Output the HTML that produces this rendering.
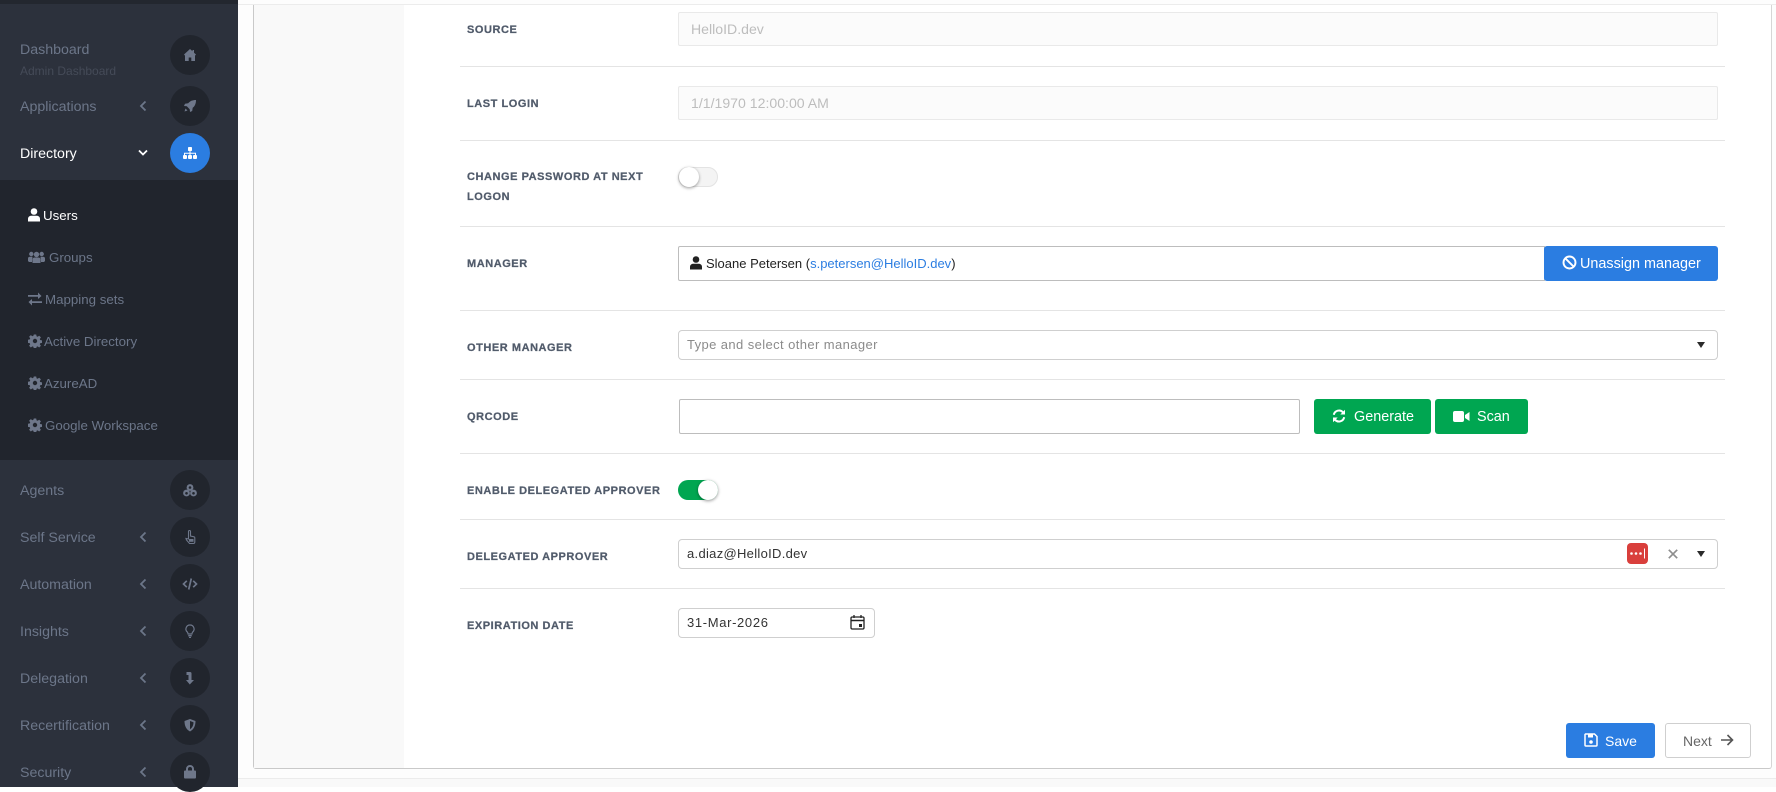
<!DOCTYPE html>
<html><head><meta charset="utf-8"><style>
html,body{margin:0;padding:0}
body{width:1776px;height:787px;position:relative;overflow:hidden;background:#fff;font-family:"Liberation Sans",sans-serif;font-size:14px}
div,span,svg{position:absolute;box-sizing:border-box;white-space:nowrap}
.n{left:20px;margin-top:1px;color:#6c7689;font-size:14.200px;line-height:20px}
.c{left:170px;width:40px;height:40px;border-radius:50%;background:#21252d}
.c svg{left:10px;top:10px;width:20px;height:20px;fill:#6e778a}
.ch{left:139px;width:8px;height:12px}
.s{color:#6c7689;font-size:13.300px;line-height:18px}
.si{left:28px;width:14px;height:14px;fill:#6e778a}
.l{left:467px;color:#515b6b;font:bold 11px/16px "Liberation Sans",sans-serif;letter-spacing:.55px;-webkit-text-stroke:.25px #515b6b}
.hr{left:460px;width:1265px;height:1px;background:#e4e4e4}
.in{border:1px solid #e9e9e9;background:#fbfbfb;border-radius:2px;color:#bdbdbd;font-size:14.100px;padding-left:12px}
.b{border-radius:3px;color:#fff;font-size:14px;text-align:center}
.sel{border:1px solid #cfcfcf;border-radius:4px;background:#fff;font-size:13px;padding-left:8px}
.ar{width:0;height:0;border-left:4.500px solid transparent;border-right:4.500px solid transparent;border-top:6px solid #2a2a2a}
</style></head><body>
<div style="left:238px;top:0;width:1538px;height:787px;background:#fdfdfd"></div>
<div style="left:238px;top:4px;width:1538px;height:1px;background:#ececec"></div>
<div style="left:238px;top:778px;width:1538px;height:9px;background:#f9f9f9;border-top:1px solid #ececec"></div>
<div style="left:253px;top:5px;width:1519px;height:764px;background:#fff;border-left:1px solid #c9c9c9;border-right:1px solid #d6d6d6;border-bottom:1px solid #c9c9c9;border-radius:0 0 3px 3px"></div>
<div style="left:254px;top:5px;width:150px;height:763px;background:#f9f9f9"></div>

<div style="left:0;top:0;width:238px;height:787px;background:#2c313c"></div>
<div style="left:0;top:0;width:238px;height:4px;background:#23272f"></div>
<div style="left:0;top:180px;width:238px;height:280px;background:#21252d"></div>

<div class="n" style="top:39px">Dashboard</div>
<div class="n" style="top:60px;font-size:12px;color:#454b58">Admin Dashboard</div>
<div class="n" style="top:96px">Applications</div>
<div class="n" style="top:143px;color:#fff">Directory</div>
<div class="n" style="top:480px">Agents</div>
<div class="n" style="top:527px">Self Service</div>
<div class="n" style="top:574px">Automation</div>
<div class="n" style="top:621px">Insights</div>
<div class="n" style="top:668px">Delegation</div>
<div class="n" style="top:715px">Recertification</div>
<div class="n" style="top:762px">Security</div>

<svg class="ch" style="top:100px" viewBox="0 0 8 12"><path d="M6.500 1.500 2 6l4.500 4.500" fill="none" stroke="#6c7689" stroke-width="1.800"/></svg>
<svg style="left:138px;top:149px;width:10px;height:8px" viewBox="0 0 10 8"><path d="M1 1.500 5 5.500l4-4" fill="none" stroke="#fff" stroke-width="1.800"/></svg>
<svg class="ch" style="top:531px" viewBox="0 0 8 12"><path d="M6.500 1.500 2 6l4.500 4.500" fill="none" stroke="#6c7689" stroke-width="1.800"/></svg>
<svg class="ch" style="top:578px" viewBox="0 0 8 12"><path d="M6.500 1.500 2 6l4.500 4.500" fill="none" stroke="#6c7689" stroke-width="1.800"/></svg>
<svg class="ch" style="top:625px" viewBox="0 0 8 12"><path d="M6.500 1.500 2 6l4.500 4.500" fill="none" stroke="#6c7689" stroke-width="1.800"/></svg>
<svg class="ch" style="top:672px" viewBox="0 0 8 12"><path d="M6.500 1.500 2 6l4.500 4.500" fill="none" stroke="#6c7689" stroke-width="1.800"/></svg>
<svg class="ch" style="top:719px" viewBox="0 0 8 12"><path d="M6.500 1.500 2 6l4.500 4.500" fill="none" stroke="#6c7689" stroke-width="1.800"/></svg>
<svg class="ch" style="top:766px" viewBox="0 0 8 12"><path d="M6.500 1.500 2 6l4.500 4.500" fill="none" stroke="#6c7689" stroke-width="1.800"/></svg>

<div class="c" style="top:35px"><svg viewBox="0 0 20 20"><path d="M10 4 4 9.500 4.800 10.500 5 10.400V16h3.700v-3.500h2.600V16H15v-5.600l.2.100.8-1L14 7.700V5h-1.500v1.300z"/></svg></div>
<div class="c" style="top:86px"><svg viewBox="0 0 20 20"><path d="M16 4c-3.500 0-6 1-7.800 3.300L5 7.800 4 10l2.800.3 2.900 2.900.3 2.800 2.200-1 .5-3.200C15 10 16 7.500 16 4zM5.500 12.500 4.500 15.500 7.500 14.500z"/></svg></div>
<div class="c" style="top:133px;background:#2b7de1"><svg viewBox="0 0 20 20" style="fill:#fff"><rect x="8" y="4" width="4" height="4" rx=".8"/><path d="M9.500 8h1v1.800H16V12h-1v-1.200h-4.500V12h-1v-1.200H5V12H4V9.800h5.500z"/><rect x="3" y="12" width="4" height="4" rx="1"/><rect x="8" y="12" width="4" height="4" rx="1"/><rect x="13" y="12" width="4" height="4" rx="1"/></svg></div>
<div class="c" style="top:470px"><svg viewBox="0 0 20 20"><circle cx="10" cy="7.500" r="3.400"/><circle cx="6.500" cy="13" r="3.400"/><circle cx="13.500" cy="13" r="3.400"/><circle cx="10" cy="7.500" r="1.300" fill="#21252d"/><circle cx="6.500" cy="13.300" r="1.300" fill="#21252d"/><circle cx="13.500" cy="13.300" r="1.300" fill="#21252d"/></svg></div>
<div class="c" style="top:517px"><svg viewBox="0 0 20 20"><path d="M8.500 4.500a1 1 0 0 1 2 0V9l3.500.8a1 1 0 0 1 .8 1V15a1.500 1.500 0 0 1-1.500 1.500H9.500L6.500 13 6 11.500l2.500.5z" fill="none" stroke="#6e778a" stroke-width="1.100"/><rect x="9" y="12" width="4.500" height="2.800"/></svg></div>
<div class="c" style="top:564px"><svg viewBox="0 0 20 20"><path d="M6.800 6.800 3.500 10l3.300 3.200M13.200 6.800 16.500 10l-3.300 3.200M11.300 4.500 8.700 15.500" fill="none" stroke="#6e778a" stroke-width="1.700"/></svg></div>
<div class="c" style="top:611px"><svg viewBox="0 0 20 20"><path d="M10 4a4 4 0 0 1 2.700 7c-.6.700-.7 1.200-.8 2H8.100c-.1-.8-.2-1.300-.8-2A4 4 0 0 1 10 4z" fill="none" stroke="#6e778a" stroke-width="1.200"/><rect x="8.200" y="14" width="3.600" height="1.500" rx=".5"/><rect x="9" y="16" width="2" height="1"/></svg></div>
<div class="c" style="top:658px"><svg viewBox="0 0 20 20"><path d="M6.500 4H10a1.500 1.500 0 0 1 1.500 1.500V12H14l-4.200 4.500L6 12h2.500V7H6.500z"/></svg></div>
<div class="c" style="top:705px"><svg viewBox="0 0 20 20"><path d="M10 4 15.500 6c0 5-1.800 8.500-5.500 10.500C6.300 14.500 4.500 11 4.500 6zM10 6v8.300c2.300-1.500 3.500-4 3.500-7z" fill-rule="evenodd"/></svg></div>
<div class="c" style="top:752px"><svg viewBox="0 0 20 20"><path d="M5 9h1V7.500a4 4 0 0 1 8 0V9h1a1 1 0 0 1 1 1v6a1 1 0 0 1-1 1H5a1 1 0 0 1-1-1v-6a1 1 0 0 1 1-1zM8 9h4V7.500a2 2 0 0 0-4 0z" transform="translate(0,-.5)" /></svg></div>

<svg class="si" style="top:208px;width:12px;fill:#fff" viewBox="0 0 12 14"><circle cx="6" cy="3.500" r="3.300"/><path d="M0 13.500V11c0-2 1.500-3.200 3.300-3.200h5.400C10.500 7.800 12 9 12 11v2.500z"/></svg>
<div class="s" style="left:43px;top:207px;color:#fff">Users</div>
<svg class="si" style="top:250px;width:17px" viewBox="0 0 17 14"><circle cx="3.300" cy="4" r="2.200"/><circle cx="13.700" cy="4" r="2.200"/><circle cx="8.500" cy="4.500" r="2.700"/><path d="M0 11V8.500C0 7.300 1 6.800 2 6.800h2.500L4 12H1zM17 11V8.500c0-1.200-1-1.700-2-1.700h-2.500L13 12h3zM4.500 13V9.500C4.500 8.200 5.500 7.500 6.500 7.500h4c1 0 2 .7 2 2V13z"/></svg>
<div class="s" style="left:49px;top:249px">Groups</div>
<svg class="si" style="top:292px" viewBox="0 0 14 14"><path d="M0 4h10V1.500L13.500 5 10 8V5.800H0z" transform="translate(0,-1)"/><path d="M14 10H4v2.500L.500 9 4 6v2.200h10z" transform="translate(0,1)"/></svg>
<div class="s" style="left:45px;top:291px">Mapping sets</div>
<svg class="si" style="top:334px" viewBox="0 0 14 14"><path d="M5.800.500h2.400l.4 1.900 1 .4 1.600-1.100 1.700 1.700-1.100 1.600.4 1 1.900.4v2.400l-1.900.4-.4 1 1.100 1.600-1.700 1.700-1.600-1.100-1 .4-.4 1.900H5.800l-.4-1.900-1-.4-1.600 1.100-1.700-1.700 1.100-1.600-.4-1-1.900-.4V5.800l1.900-.4.4-1L1.100 2.800l1.700-1.700 1.600 1.100 1-.4zM7 4.800a2.200 2.200 0 1 0 0 4.400 2.200 2.200 0 0 0 0-4.400z" fill-rule="evenodd"/></svg>
<div class="s" style="left:44px;top:333px">Active Directory</div>
<svg class="si" style="top:376px" viewBox="0 0 14 14"><path d="M5.800.500h2.400l.4 1.900 1 .4 1.600-1.100 1.700 1.700-1.100 1.600.4 1 1.900.4v2.400l-1.900.4-.4 1 1.100 1.600-1.700 1.700-1.600-1.100-1 .4-.4 1.900H5.800l-.4-1.900-1-.4-1.600 1.100-1.700-1.700 1.100-1.600-.4-1-1.900-.4V5.800l1.900-.4.4-1L1.100 2.800l1.700-1.700 1.600 1.100 1-.4zM7 4.800a2.200 2.200 0 1 0 0 4.400 2.200 2.200 0 0 0 0-4.400z" fill-rule="evenodd"/></svg>
<div class="s" style="left:44px;top:375px">AzureAD</div>
<svg class="si" style="top:418px" viewBox="0 0 14 14"><path d="M5.800.500h2.400l.4 1.900 1 .4 1.600-1.100 1.700 1.700-1.100 1.600.4 1 1.900.4v2.400l-1.900.4-.4 1 1.100 1.600-1.700 1.700-1.600-1.100-1 .4-.4 1.900H5.800l-.4-1.900-1-.4-1.600 1.100-1.700-1.700 1.100-1.600-.4-1-1.900-.4V5.800l1.900-.4.4-1L1.100 2.800l1.700-1.700 1.600 1.100 1-.4zM7 4.800a2.200 2.200 0 1 0 0 4.400 2.200 2.200 0 0 0 0-4.400z" fill-rule="evenodd"/></svg>
<div class="s" style="left:45px;top:417px">Google Workspace</div>

<div class="hr" style="top:66px"></div><div class="hr" style="top:140px"></div><div class="hr" style="top:226px"></div><div class="hr" style="top:310px"></div><div class="hr" style="top:379px"></div><div class="hr" style="top:453px"></div><div class="hr" style="top:519px"></div><div class="hr" style="top:588px"></div>

<div class="l" style="top:22px">SOURCE</div>
<div class="l" style="top:96px">LAST LOGIN</div>
<div class="l" style="top:169px">CHANGE PASSWORD AT NEXT</div>
<div class="l" style="top:189px">LOGON</div>
<div class="l" style="top:256px">MANAGER</div>
<div class="l" style="top:340px">OTHER MANAGER</div>
<div class="l" style="top:409px">QRCODE</div>
<div class="l" style="top:483px">ENABLE DELEGATED APPROVER</div>
<div class="l" style="top:549px">DELEGATED APPROVER</div>
<div class="l" style="top:618px">EXPIRATION DATE</div>

<div class="in" style="left:678px;top:12px;width:1040px;height:34px;line-height:32px">HelloID.dev</div>
<div class="in" style="left:678px;top:86px;width:1040px;height:34px;line-height:32px">1/1/1970 12:00:00 AM</div>

<div style="left:678px;top:167px;width:40px;height:20px;border-radius:10px;background:#f4f4f4;border:1px solid #e3e3e3"></div>
<div style="left:678.500px;top:167px;width:20px;height:20px;border-radius:50%;background:#fff;box-shadow:0 1px 3px rgba(0,0,0,.4)"></div>

<div style="left:678px;top:246px;width:867px;height:35px;border:1px solid #bdbdbd;border-radius:2px 0 0 2px;background:#fff"></div>
<svg style="left:690px;top:256px;width:12px;height:14px;fill:#222" viewBox="0 0 12 14"><circle cx="6" cy="3.500" r="3.300"/><path d="M0 13.500V11c0-2 1.500-3.200 3.300-3.200h5.400C10.500 7.800 12 9 12 11v2.500z"/></svg>
<div style="left:706px;top:255px;font-size:13px;line-height:17px;color:#222">Sloane Petersen (<span style="position:static;color:#2b7de1">s.petersen@HelloID.dev</span>)</div>
<div class="b" style="left:1544px;top:246px;width:174px;height:35px;background:#2b7de1"></div>
<svg style="left:1562px;top:255px;width:15px;height:15px" viewBox="0 0 15 15"><circle cx="7.500" cy="7.500" r="6" fill="none" stroke="#fff" stroke-width="1.900"/><path d="M3.300 3.300 11.700 11.700" stroke="#fff" stroke-width="1.900"/></svg>
<div style="left:1580px;top:255px;color:#fff;font-size:14.400px;line-height:18px">Unassign manager</div>

<div class="sel" style="left:678px;top:330px;width:1040px;height:30px;line-height:27px;color:#8b8b8b;letter-spacing:.4px">Type and select other manager</div>
<div class="ar" style="left:1697px;top:342px"></div>

<div style="left:679px;top:399px;width:621px;height:35px;border:1px solid #bdbdbd;border-radius:2px;background:#fff"></div>
<div class="b" style="left:1314px;top:399px;width:117px;height:35px;background:#00a651"></div>
<svg style="left:1332px;top:409px;width:14px;height:14px" viewBox="0 0 14 14"><path d="M1.800 5.800A5.300 5.300 0 0 1 11 3.300M12.200 8.200A5.300 5.300 0 0 1 3 10.700" fill="none" stroke="#fff" stroke-width="2"/><path d="M13 .8v4.700H8.300zM1 13.200V8.500h4.700z" fill="#fff"/></svg>
<div style="left:1354px;top:408px;color:#fff;font-size:14.400px;line-height:18px">Generate</div>
<div class="b" style="left:1435px;top:399px;width:93px;height:35px;background:#00a651"></div>
<svg style="left:1453px;top:410px;width:17px;height:13px;fill:#fff" viewBox="0 0 17 13"><rect x="0" y="1" width="11" height="11" rx="2"/><path d="M12 5 16.500 2v9L12 8z"/></svg>
<div style="left:1477px;top:408px;color:#fff;font-size:14.400px;line-height:18px">Scan</div>

<div style="left:678px;top:480px;width:40px;height:20px;border-radius:10px;background:#00a651"></div>
<div style="left:698px;top:480px;width:20px;height:20px;border-radius:50%;background:#fff;box-shadow:0 1px 3px rgba(0,0,0,.4)"></div>

<div class="sel" style="left:678px;top:539px;width:1040px;height:30px;line-height:28px;color:#333;letter-spacing:.3px">a.diaz@HelloID.dev</div>
<div style="left:1627px;top:543px;width:21px;height:21px;border-radius:4px;background:#d93f3c"></div>
<svg style="left:1628px;top:548px;width:19px;height:11px" viewBox="0 0 19 11"><circle cx="3.500" cy="5.500" r="1.300" fill="#fff"/><circle cx="8" cy="5.500" r="1.300" fill="#fff"/><circle cx="12.500" cy="5.500" r="1.300" fill="#fff"/><path d="M16.500 0.500v10" stroke="#fff" stroke-width="1"/></svg>
<svg style="left:1668px;top:549px;width:10px;height:10px" viewBox="0 0 10 10"><path d="M.8.800 9.200 9.200M9.200.8.800 9.200" stroke="#8e8e8e" stroke-width="1.700"/></svg>
<div class="ar" style="left:1697px;top:551px"></div>

<div class="sel" style="left:678px;top:608px;width:197px;height:30px;line-height:28px;color:#333;letter-spacing:.65px">31-Mar-2026</div>
<svg style="left:850px;top:614px;width:15px;height:16px" viewBox="0 0 15 16"><rect x="1" y="3" width="13" height="12" rx="1.200" fill="none" stroke="#222" stroke-width="1.300"/><path d="M1 6.500h13" stroke="#222" stroke-width="1.500"/><path d="M4 1v3M11 1v3" stroke="#222" stroke-width="1.300"/><rect x="9" y="10" width="3" height="3" fill="#222"/></svg>

<div class="b" style="left:1566px;top:723px;width:89px;height:35px;background:#2b7de1"></div>
<svg style="left:1584px;top:733px;width:14px;height:14px" viewBox="0 0 14 14"><path d="M1.500 1h9L13 3.500V12a1 1 0 0 1-1 1H2a1 1 0 0 1-1-1V1.500z" fill="none" stroke="#fff" stroke-width="1.500"/><rect x="4" y="1.500" width="5" height="3" fill="#fff"/><circle cx="7" cy="9" r="1.800" fill="#fff"/></svg>
<div style="left:1605px;top:732px;color:#fff;font-size:14px;line-height:18px">Save</div>
<div style="left:1665px;top:723px;width:86px;height:35px;background:#fff;border:1px solid #cfcfcf;border-radius:3px"></div>
<div style="left:1683px;top:732px;color:#666;font-size:14px;line-height:18px">Next</div>
<svg style="left:1720px;top:733px;width:14px;height:14px" viewBox="0 0 14 14"><path d="M1 7h11.500M7.500 2l5 5-5 5" fill="none" stroke="#555" stroke-width="1.600"/></svg>
</body></html>
